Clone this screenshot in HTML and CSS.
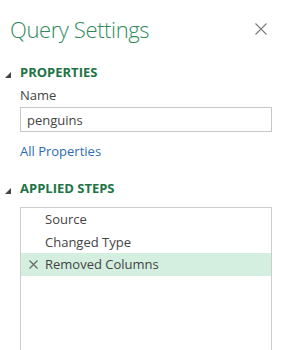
FILE: index.html
```html
<!DOCTYPE html>
<html lang="en">
<head>
    <meta charset="UTF-8">
    <title>Query Settings</title>
    <link rel="stylesheet" href="styles.css">
</head>
<body>
    <div class="pane">
        <div class="pane-head">
            <h1 class="pane-title">Query Settings</h1>
            <button class="close-btn" aria-label="Close">
                <svg width="12" height="12" viewBox="0 0 12 12">
                    <path d="M0.5 0.5 L11.5 11.5 M11.5 0.5 L0.5 11.5" stroke="#7a7a7a" stroke-width="1.1" fill="none"/>
                </svg>
            </button>
        </div>

        <section class="group">
            <div class="group-title"><span class="caret"></span>PROPERTIES</div>
            <div class="group-body">
                <label for="queryName" class="field-label">Name</label>
                <input type="text" id="queryName" class="field-input" value="penguins">
                <a href="#" class="link">All Properties</a>
            </div>
        </section>

        <section class="group steps">
            <div class="group-title"><span class="caret"></span>APPLIED STEPS</div>
            <div class="group-body">
                <ul class="step-list">
                    <li class="step">Source</li>
                    <li class="step">Changed Type</li>
                    <li class="step selected">
                        <svg class="step-del" width="9" height="9" viewBox="0 0 9 9">
                            <path d="M0.5 0.5 L8.5 8.5 M8.5 0.5 L0.5 8.5" stroke="#666" stroke-width="1.1" fill="none"/>
                        </svg>
                        Removed Columns
                    </li>
                </ul>
            </div>
        </section>
    </div>
</body>
</html>
```

FILE: styles.css
```css
body {
    margin: 0;
    font-family: 'Open Sans', 'Liberation Sans', sans-serif;
    font-size: 13px;
    color: #444;
    background: #fff;
}
.pane {
    width: 300px;
    height: 350px;
    overflow: hidden;
}
.pane-head {
    display: flex;
    align-items: center;
    justify-content: space-between;
    padding: 13px 33px 0 10px;
    height: 32px;
}
.pane-title {
    margin: 0;
    font-size: 22px;
    font-weight: 300;
    line-height: 32px;
    letter-spacing: -0.4px;
    color: #2f8a5c;
}
.close-btn {
    display: flex;
    padding: 0;
    border: none;
    background: none;
    cursor: pointer;
}
.group-title {
    display: flex;
    align-items: flex-start;
    margin-top: 19px;
    font-weight: 700;
    line-height: 16px;
    color: #217346;
}
.caret {
    width: 6px;
    height: 6px;
    margin: 8px 9px 0 5px;
    background: #444;
    clip-path: polygon(100% 0, 100% 100%, 0 100%);
}
.group-body {
    padding: 0 28px 0 20px;
}
.field-label {
    display: block;
    margin-top: 7px;
    line-height: 16px;
}
.field-input {
    display: block;
    width: 100%;
    height: 25px;
    box-sizing: border-box;
    margin-top: 4px;
    padding: 0 6px;
    border: 1px solid #c6c6c6;
    font-family: inherit;
    font-size: 13px;
    color: #444;
    outline: none;
}
.link {
    display: inline-block;
    margin-top: 11px;
    line-height: 16px;
    color: #2e6db4;
    text-decoration: none;
}
.steps .group-title {
    margin-top: 20px;
}
.step-list {
    list-style: none;
    margin: 11px 0 0;
    padding: 0;
    height: 200px;
    border: 1px solid #cdcdcd;
}
.step {
    display: flex;
    align-items: center;
    height: 22.5px;
    padding-left: 24px;
    line-height: 22px;
}
.step.selected {
    padding-left: 8px;
    background: #d4eee0;
}
.step-del {
    margin-right: 7px;
}
```
